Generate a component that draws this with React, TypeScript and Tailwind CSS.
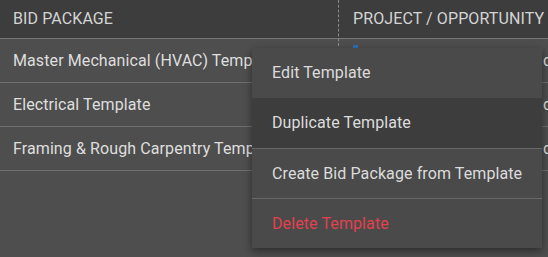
import React from 'react';

interface Row {
  name: string;
  project: string;
  client: string;
}

const rows: Row[] = [
  { name: 'Master Mechanical (HVAC) Template', project: 'Westfield Plaza Phase II', client: 'commercial' },
  { name: 'Electrical Template', project: 'Harbor Point Medical', client: 'commercial' },
  { name: 'Framing & Rough Carpentry Template', project: 'Riverside Lofts', client: 'commercial' },
];

const menuItems = [
  { label: 'Edit Template', hover: false, danger: false, divider: false },
  { label: 'Duplicate Template', hover: true, danger: false, divider: false },
  { label: 'Create Bid Package from Template', hover: false, danger: false, divider: true },
  { label: 'Delete Template', hover: false, danger: true, divider: true },
];

export default function App() {
  return (
    <div
      className="relative w-[548px] h-[257px] overflow-hidden bg-[#4e4e4e] text-[#dedede] tracking-[0.1px]"
      style={{ fontFamily: 'Roboto, "Noto Sans", sans-serif' }}
    >
      {/* Header */}
      <div className="flex h-[39px] bg-[#3d3d3d] border-b border-[#777777] text-[16px] text-[#d4d4d4] uppercase">
        <div className="w-[338px] shrink-0 flex items-center pl-[13px]">Bid Package</div>
        <div className="flex-1 flex items-center pl-[15px] whitespace-nowrap">Project / Opportunity</div>
      </div>

      {/* column resize handle */}
      <div className="absolute left-[338px] top-0 h-[46px] border-l border-dashed border-[#8a8a8a]" />
      <div className="absolute left-[353px] top-[45px] w-[5px] h-[3px] bg-[#2f6fb3]" />

      {/* Rows */}
      {rows.map((r) => (
        <div key={r.name} className="flex h-[44px] border-b border-[#6f6f6f] text-[16px]">
          <div className="w-[338px] shrink-0 flex items-center pl-[13px] whitespace-nowrap overflow-hidden">
            {r.name}
          </div>
          <div className="flex-1 flex items-center pl-[15px] whitespace-nowrap">
            <span className="w-[190px] shrink-0 truncate">{r.project}</span>
            <span>{r.client}</span>
          </div>
        </div>
      ))}

      {/* Context menu */}
      <div className="absolute left-[252px] top-[48px] w-[290px] bg-[#4a4a4a] shadow-[0_3px_8px_rgba(0,0,0,0.45)] text-[16px]">
        {menuItems.map((m) => (
          <div
            key={m.label}
            className={`h-[50px] flex items-center px-[20px] whitespace-nowrap ${m.divider ? 'border-t border-[#686868]' : ''} ${m.hover ? 'bg-[#3d3d3d]' : ''} ${m.danger ? 'text-[#e2414f]' : 'text-[#dcdcdc]'}`}
          >
            {m.label}
          </div>
        ))}
      </div>
    </div>
  );
}
